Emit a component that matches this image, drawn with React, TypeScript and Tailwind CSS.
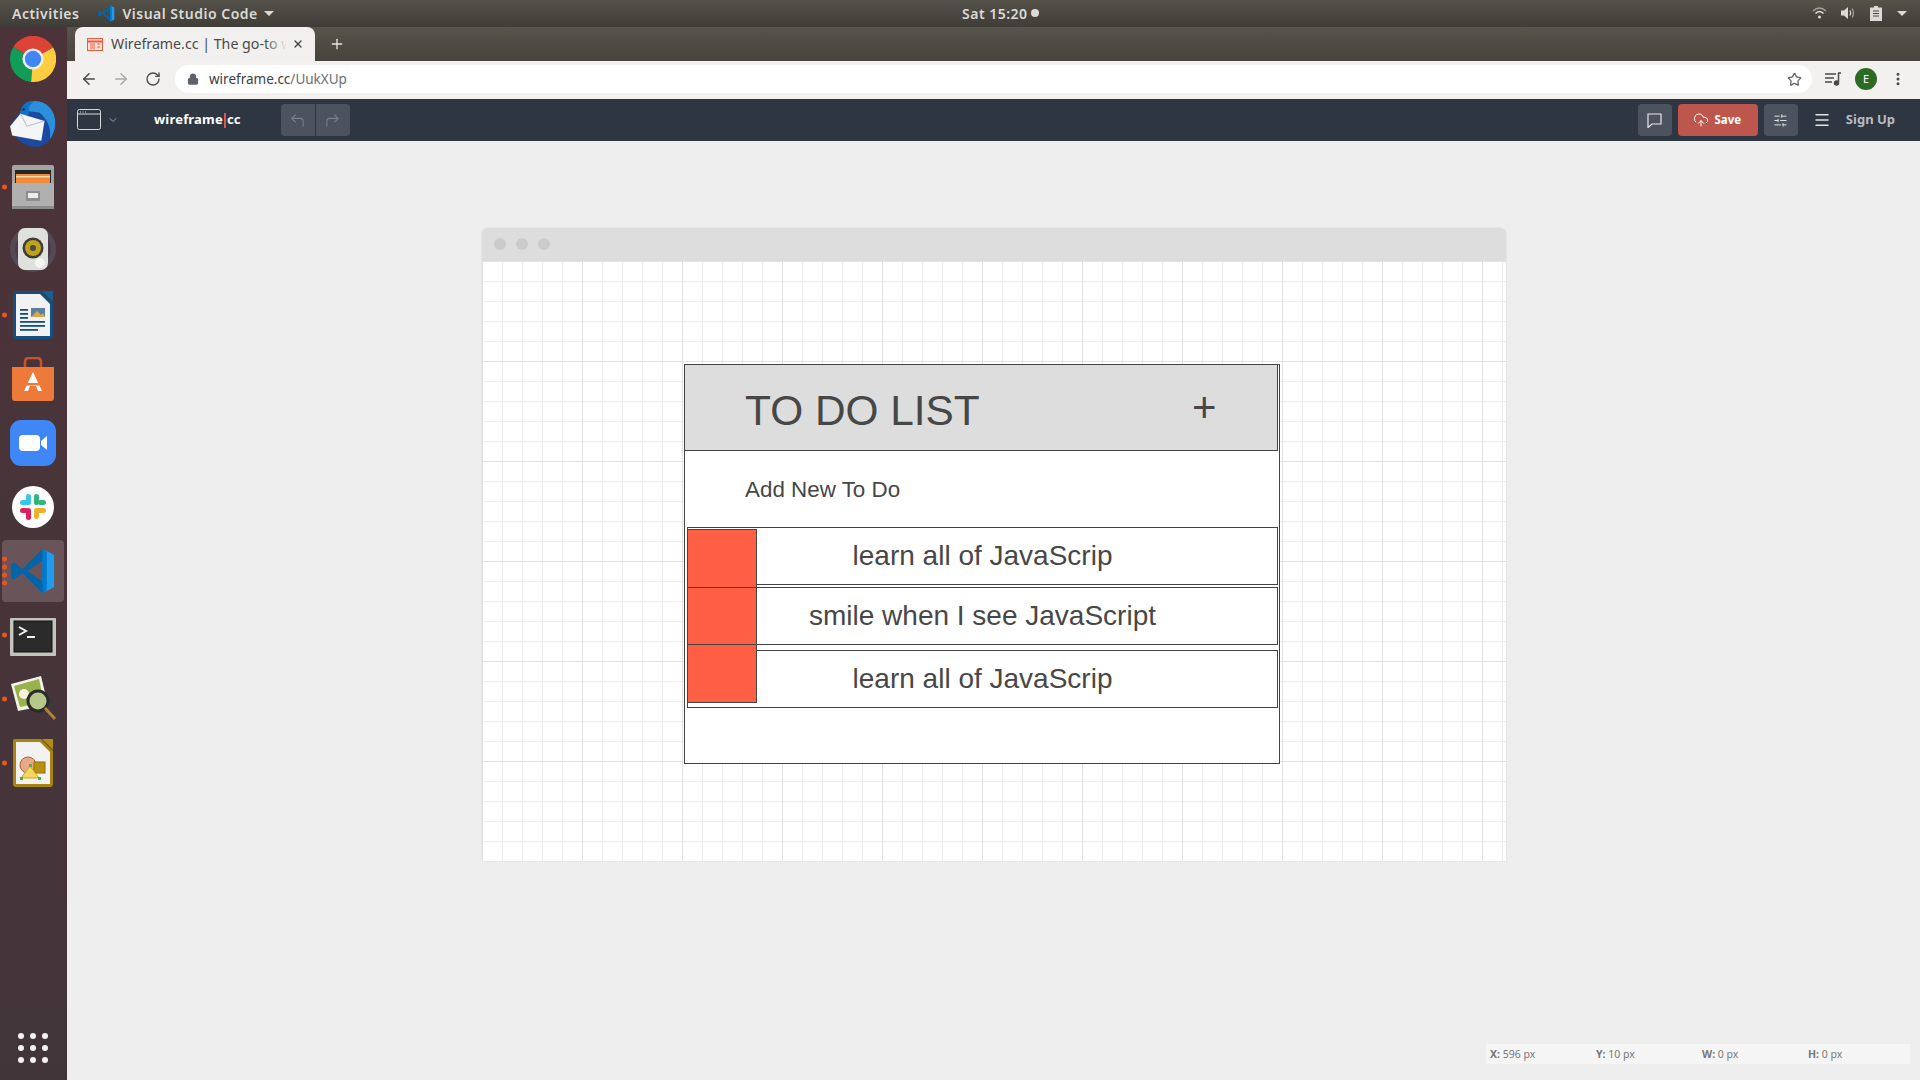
import { ArrowLeft, ArrowRight, ChevronDown, CloudUpload, CornerUpLeft, CornerUpRight, Lock, Menu, MoreVertical, Plus, RotateCw, SlidersHorizontal, Star, X } from "lucide-react";
import type { ReactNode } from "react";

// dock icons, all drawn by hand
function ChromeIcon() {
  return (
    <svg width="46" height="46" viewBox="0 0 48 48">
      <path d="M24 24 L45 12 A24 24 0 0 0 3.500 11.500 Z" fill="#db4437" />
      <path d="M24 24 L3.500 11.500 A24 24 0 0 0 22 47.900 Z" fill="#0f9d58" />
      <path d="M24 24 L22 47.900 A24 24 0 0 0 45 12 Z" fill="#ffcd40" />
      <circle cx="24" cy="24" r="11" fill="#f1f1f1" />
      <circle cx="24" cy="24" r="8.500" fill="#4285f4" />
    </svg>
  );
}

function ThunderbirdIcon() {
  return (
    <svg width="50" height="50" viewBox="0 0 48 48">
      <path d="M4 24 C4 38 14 47 28 47 C38 46 45 36 46 25 C46 14 40 6 30 3 L12 12 Z" fill="#1c4aa0" />
      <path d="M13 12 C16 2 30 -1 40 9 C47 17 47 30 40 40 C42 30 38 20 30 14 Z" fill="#2b8fdc" />
      <path d="M12 15 C12 6 19 2 25 3 C21 6 19 10 20 15 L15 20 Z" fill="#1273c4" />
      <circle cx="15" cy="11" r="1.200" fill="#0c2a55" />
      <path d="M2 27 L12 15 L35 22 L32 41 L4 36 Z" fill="#f5f5f5" />
      <path d="M12 15 L18 27 L35 22" fill="none" stroke="#b8bcc4" strokeWidth="1" />
    </svg>
  );
}

function FilesIcon() {
  return (
    <svg width="42" height="44" viewBox="0 0 42 44">
      <rect x="0" y="0" width="42" height="44" rx="2" fill="#a3a3a3" />
      <rect x="3" y="5" width="36" height="14" fill="#262626" />
      <rect x="4" y="9" width="34" height="9" fill="#f08a3c" />
      <rect x="4" y="11" width="34" height="1.500" fill="#f7d9a8" />
      <rect x="0" y="18" width="42" height="26" rx="1" fill="#b0b0b0" />
      <rect x="0" y="41" width="42" height="3" rx="1" fill="#8a8a8a" />
      <rect x="14" y="26" width="14" height="10" rx="1" fill="#8d8d8d" />
      <rect x="16" y="28" width="10" height="5" fill="#ededed" />
    </svg>
  );
}

function SpeakerIcon() {
  return (
    <svg width="48" height="46" viewBox="0 0 48 46">
      <circle cx="24" cy="21" r="23" fill="#544a55" />
      <circle cx="24" cy="21" r="18" fill="#4a3c47" />
      <rect x="9" y="0" width="30" height="42" rx="7" fill="#dfe1dd" />
      <circle cx="24" cy="20" r="10.500" fill="#3c3c38" />
      <circle cx="24" cy="20" r="8" fill="#bfa11c" />
      <circle cx="24" cy="20" r="3" fill="#4a4a40" />
      <circle cx="31" cy="35" r="5" fill="#f4f4f2" />
    </svg>
  );
}

function WriterIcon() {
  return (
    <svg width="40" height="48" viewBox="0 0 40 48">
      <path d="M2 0 H28 L40 12 V45 Q40 48 37 48 H3 Q0 48 0 45 V2 Q0 0 2 0 Z" fill="#14507f" />
      <path d="M3 3 H27 L37 13 V45 H3 Z" fill="#f2f2f2" />
      <path d="M29 0 H40 V11 Z" fill="#14608f" />
      <rect x="7" y="18" width="8" height="1.800" fill="#14507f" />
      <rect x="7" y="22" width="8" height="1.800" fill="#14507f" />
      <rect x="7" y="26" width="8" height="1.800" fill="#14507f" />
      <rect x="7" y="30" width="25" height="1.800" fill="#14507f" />
      <rect x="7" y="34" width="25" height="1.800" fill="#14507f" />
      <rect x="7" y="38" width="18" height="1.800" fill="#14507f" />
      <rect x="18" y="17" width="14" height="9" fill="#5d7f9e" />
      <path d="M18 26 L24 20 L28 24 L30 22 L32 26 Z" fill="#d9a84a" />
    </svg>
  );
}

function SoftwareIcon() {
  return (
    <svg width="42" height="44" viewBox="0 0 42 44">
      <path d="M13 10 V5 Q13 1 17 1 H25 Q29 1 29 5 V10" fill="none" stroke="#c9532a" strokeWidth="2.500" />
      <path d="M0 10 H42 V41 Q42 44 39 44 H3 Q0 44 0 41 Z" fill="#ee7a3a" />
      <path d="M21 15 L30 34 H26 L24 29 H18 L16 34 H12 Z" fill="#fff" />
      <rect x="12" y="26" width="18" height="2.500" fill="#ee7a3a" />
    </svg>
  );
}

function ZoomIcon() {
  return (
    <svg width="46" height="46" viewBox="0 0 46 46">
      <rect width="46" height="46" rx="11" fill="#3f86f7" />
      <rect x="9" y="15" width="21" height="16" rx="4" fill="#fff" />
      <path d="M31 21 L37 16 V30 L31 25 Z" fill="#fff" />
    </svg>
  );
}

function SlackIcon() {
  return (
    <svg width="42" height="42" viewBox="0 0 42 42">
      <circle cx="21" cy="21" r="21" fill="#fff" />
      <rect x="8" y="14" width="11" height="5" rx="2.500" fill="#36c5f0" />
      <rect x="14" y="8" width="5" height="8" rx="2.500" fill="#36c5f0" />
      <rect x="22" y="8" width="5" height="11" rx="2.500" fill="#2eb67d" />
      <rect x="26" y="14" width="8" height="5" rx="2.500" fill="#2eb67d" />
      <rect x="22" y="22" width="12" height="5" rx="2.500" fill="#ecb22e" />
      <rect x="22" y="25" width="5" height="8" rx="2.500" fill="#ecb22e" />
      <rect x="14" y="22" width="5" height="12" rx="2.500" fill="#e01e5a" />
      <rect x="8" y="22" width="8" height="5" rx="2.500" fill="#e01e5a" />
    </svg>
  );
}

function VsCodeIcon({ size }: { size: number }) {
  return (
    <svg width={size} height={size} viewBox="0 0 48 48">
      <path d="M34 1 L46 7 V41 L34 47 Z" fill="#1f9cf0" />
      <path d="M34 1 L13 22 L4 15 L1 17 V31 L4 33 L13 26 L34 47 L38 44 V4 Z M34 13 V35 L18 24 Z" fill="#0065a9" fillRule="evenodd" />
      <path d="M34 1 L38 4 V44 L34 47 Z" fill="#007acc" />
    </svg>
  );
}

function TerminalIcon() {
  return (
    <svg width="46" height="38" viewBox="0 0 46 38">
      <rect width="46" height="38" rx="1" fill="#c4c4bf" />
      <rect x="4" y="3" width="38" height="31" fill="#2b2b2b" stroke="#111" />
      <path d="M9 9 L16 13 L9 17" fill="none" stroke="#f2f2f2" strokeWidth="2" />
      <rect x="17" y="18" width="8" height="2" fill="#f2f2f2" />
    </svg>
  );
}

function ViewerIcon() {
  return (
    <svg width="46" height="48" viewBox="0 0 46 48">
      <path d="M1 9 L31 1 L38 30 L8 36 Z" fill="#f2f2ea" />
      <path d="M4 11 L29 4 L34 27 L10 32 Z" fill="#97b34a" />
      <circle cx="14" cy="19" r="5" fill="#f6f1e0" />
      <circle cx="28" cy="26" r="10" fill="#b5c78a" stroke="#2b2b2b" strokeWidth="3" />
      <path d="M35 33 L45 44" stroke="#b07f3e" strokeWidth="3" />
    </svg>
  );
}

function DrawIcon() {
  return (
    <svg width="40" height="48" viewBox="0 0 40 48">
      <path d="M2 0 H28 L40 12 V45 Q40 48 37 48 H3 Q0 48 0 45 V2 Q0 0 2 0 Z" fill="#a88510" />
      <path d="M3 3 H27 L37 13 V45 H3 Z" fill="#f2f2f2" />
      <path d="M29 0 H40 V11 Z" fill="#b08d12" />
      <circle cx="15" cy="26" r="8" fill="#e8a88a" stroke="#b0603e" />
      <rect x="21" y="23" width="11" height="11" fill="#b8920e" stroke="#8a6e08" />
      <path d="M17 27 L26 39 H8 Z" fill="#f4d65e" stroke="#c9a820" />
      <rect x="16" y="25" width="3" height="3" fill="#4caf50" />
      <rect x="7" y="38" width="3" height="3" fill="#4caf50" />
      <rect x="25" y="38" width="3" height="3" fill="#4caf50" />
    </svg>
  );
}

function DockItem({ dots = 0, active = false, children }: { dots?: number; active?: boolean; children: ReactNode }) {
  return (
    <div className="relative flex h-16 w-full items-center justify-center pr-[1px]">
      {active && <div className="absolute left-[2px] right-[3px] top-[1px] bottom-[1px] rounded bg-[#685459]" />}
      <div className="absolute left-[2px] top-1/2 flex -translate-y-1/2 flex-col gap-[3px]">
        {Array.from({ length: dots }).map((_, i) => (
          <span key={i} className="block h-[5px] w-[5px] rounded-full bg-[#e95420]" />
        ))}
      </div>
      <div className="relative flex items-center justify-center">{children}</div>
    </div>
  );
}

function Dock() {
  return (
    <aside className="flex w-[67px] shrink-0 flex-col justify-between bg-linear-to-b from-[#4c3339] to-[#423539]">
      <div className="flex flex-col">
        <DockItem><ChromeIcon /></DockItem>
        <DockItem><ThunderbirdIcon /></DockItem>
        <DockItem dots={1}><FilesIcon /></DockItem>
        <DockItem><SpeakerIcon /></DockItem>
        <DockItem dots={1}><WriterIcon /></DockItem>
        <DockItem><SoftwareIcon /></DockItem>
        <DockItem><ZoomIcon /></DockItem>
        <DockItem><SlackIcon /></DockItem>
        <DockItem dots={4} active><VsCodeIcon size={46} /></DockItem>
        <DockItem dots={1}><div className="mt-[4px]"><TerminalIcon /></div></DockItem>
        <DockItem dots={1}><ViewerIcon /></DockItem>
        <DockItem dots={1}><DrawIcon /></DockItem>
      </div>
      <div className="mb-[17px] ml-[18px] grid w-[30px] grid-cols-3 gap-[6px]">
        {Array.from({ length: 9 }).map((_, i) => (
          <span key={i} className="block h-[6px] w-[6px] rounded-full bg-[#f3f1f1]" />
        ))}
      </div>
    </aside>
  );
}

function TopBar() {
  return (
    <header className="flex h-[27px] items-center justify-between bg-linear-to-b from-[#55524a] to-[#3f3d37] pb-[1px] pl-3 pr-[13px] font-['Noto_Sans',sans-serif] text-[14px] font-semibold tracking-[0.5px] text-[#dcdad4]">
      <div className="flex items-center">
        <span>Activities</span>
        <span className="ml-[19px] mr-[7px]"><VsCodeIcon size={17} /></span>
        <span>Visual Studio Code</span>
        <span className="ml-[6px] h-0 w-0 border-x-[5px] border-t-[5px] border-x-transparent border-t-[#dcdad4]" />
      </div>
      <div className="absolute left-[962px] flex items-center gap-[3px]">
        <span>Sat 15:20</span>
        <span className="h-[8px] w-[8px] rounded-full bg-[#dcdad4]" />
      </div>
      <div className="flex items-center gap-[14px]">
        <svg width="15" height="14" viewBox="0 0 15 14" fill="none" stroke="#dcdad4" strokeWidth="1.500">
          <path d="M1 5 Q7.500 -1 14 5" opacity=".6" />
          <path d="M3.500 7.500 Q7.500 3.500 11.500 7.500" />
          <circle cx="7.500" cy="11" r="1.500" fill="#dcdad4" stroke="none" />
        </svg>
        <svg width="15" height="14" viewBox="0 0 15 14" fill="none" stroke="#dcdad4" strokeWidth="1.300">
          <path d="M0 4.500 H3 L7 1 V13 L3 9.500 H0 Z" fill="#dcdad4" stroke="none" />
          <path d="M9 4.500 Q10.500 7 9 9.500" />
          <path d="M11 2.500 Q14 7 11 11.500" opacity=".6" />
        </svg>
        <svg width="12" height="15" viewBox="0 0 12 15">
          <path d="M4 0 H8 V1.500 H12 V15 H0 V1.500 H4 Z" fill="#dcdad4" />
          <path d="M3 5 H9 M3 7.500 H9 M3 10 H9" stroke="#4a473f" strokeWidth="1" />
        </svg>
        <span className="ml-[1px] h-0 w-0 border-x-[5px] border-t-[5px] border-x-transparent border-t-[#dcdad4]" />
      </div>
    </header>
  );
}

function TabStrip() {
  return (
    <div className="flex h-[34px] items-center bg-linear-to-b from-[#57544b] to-[#45433c] pl-[8px]">
      <div className="flex h-[34px] w-[240px] items-center rounded-t-[8px] bg-[#f1f0ee] pl-[12px] pr-[11px] font-['Noto_Sans',sans-serif] text-[14.200px] text-[#4a4a4a]">
        <svg width="16" height="13" viewBox="0 0 16 13" className="mr-[8px] shrink-0" fill="none" stroke="#ee5a3b" strokeWidth="1">
          <rect x=".5" y=".5" width="15" height="12" fill="#fbe2db" />
          <path d="M.5 3.500 H15.500" strokeWidth="2" />
          <path d="M3 6 H8 M3 8 H8 M3 10 H8 M10 6 H13 M10 9 H13" />
        </svg>
        <span className="relative w-[176px] overflow-hidden whitespace-nowrap">
          Wireframe.cc | The go-to web
          <span className="absolute inset-y-0 right-0 w-[22px] bg-linear-to-r from-transparent to-[#f1f0ee]" />
        </span>
        <X size={12} strokeWidth={2.5} className="ml-auto shrink-0 text-[#3f3f3f]" />
      </div>
      <Plus size={16} strokeWidth={2} className="ml-[14px] text-[#e8e6e1]" />
    </div>
  );
}

function AddressBar() {
  return (
    <div className="flex h-[38px] items-center bg-[#f2f1f0] pb-[2px] pl-[13px] text-[#5f6368]">
      <ArrowLeft size={18} strokeWidth={2} className="text-[#4a4a4a]" />
      <ArrowRight size={18} strokeWidth={2} className="ml-[14px] text-[#a9a9a9]" />
      <RotateCw size={16} strokeWidth={2} className="ml-[15px] text-[#4a4a4a]" />
      <div className="ml-[14px] flex h-[28px] w-[1637px] items-center rounded-full bg-white pl-[12px] pr-[10px]">
        <Lock size={12} strokeWidth={2.5} className="text-[#5f6368]" fill="#5f6368" />
        <span className="ml-[10px] font-['Noto_Sans',sans-serif] text-[13.500px] text-[#3c4043]">
          wireframe.cc<span className="text-[#6b7075]">/UukXUp</span>
        </span>
        <Star size={15} strokeWidth={2} className="ml-auto text-[#5f6368]" />
      </div>
      <svg width="16" height="14" viewBox="0 0 16 14" className="ml-[13px]" fill="none" stroke="#4a4a4a" strokeWidth="1.500">
        <path d="M0 2 H11 M0 6 H9 M0 10 H7" />
        <path d="M13.500 1 V10" />
        <path d="M13 1 H16" />
        <circle cx="11.500" cy="11" r="2" fill="#4a4a4a" />
      </svg>
      <div className="ml-[14px] flex h-[22px] w-[22px] items-center justify-center rounded-full bg-[#2c6b24] font-['Noto_Sans',sans-serif] text-[11px] text-white">E</div>
      <MoreVertical size={16} strokeWidth={2.5} className="ml-[13px] text-[#4a4a4a]" />
    </div>
  );
}

function ToolBar() {
  return (
    <div className="flex h-[42px] items-center bg-[#2e3641] pl-[10px] pr-[25px] font-['Noto_Sans',sans-serif] text-[13px] font-bold">
      <svg width="24" height="22" viewBox="0 0 24 22" fill="none" stroke="#d8dade" strokeWidth="1">
        <rect x=".5" y=".5" width="23" height="20" rx="2" />
        <path d="M.5 5 H23.500" />
        <path d="M3 3 H4 M5.500 3 H6.500 M8 3 H9" />
      </svg>
      <ChevronDown size={12} className="ml-[6px] text-[#9aa0a8]" />
      <div className="ml-[35px] flex items-center tracking-[0.2px] text-white">
        wireframe
        <span className="mx-[1px] inline-block h-[15px] w-[2px] bg-[#e2574c]" />
        cc
      </div>
      <div className="ml-[40px] flex h-[32px] items-center gap-[1px]">
        <span className="flex h-full w-[34px] items-center justify-center rounded-l bg-[#4c535e] text-[#78808a]"><CornerUpLeft size={17} strokeWidth={1.5} /></span>
        <span className="flex h-full w-[34px] items-center justify-center rounded-r bg-[#4c535e] text-[#78808a]"><CornerUpRight size={17} strokeWidth={1.5} /></span>
      </div>
      <div className="ml-auto flex items-center">
        <span className="flex h-[32px] w-[34px] items-center justify-center rounded bg-[#4c535e]">
          <svg width="15" height="15" viewBox="0 0 15 15" fill="none" stroke="#e8e9eb" strokeWidth="1.200">
            <path d="M1 1 H14 V11 H5 L1 14.500 Z" />
          </svg>
        </span>
        <span className="ml-[6px] flex h-[32px] w-[80px] items-center justify-center gap-[6px] rounded bg-[#bd574d] pr-[2px] text-[11.500px] text-white"><CloudUpload size={16} strokeWidth={1.5} />Save</span>
        <span className="ml-[6px] flex h-[32px] w-[34px] items-center justify-center rounded bg-[#4c535e] text-[#e8e9eb]"><SlidersHorizontal size={15} strokeWidth={1.5} /></span>
        <Menu size={18} className="ml-[15px] text-[#e2e3e5]" />
        <span className="ml-[15px] text-[#b9bcc2]">Sign Up</span>
      </div>
    </div>
  );
}

function TodoRow({ text, className }: { text: string; className: string }) {
  return (
    <div className={`absolute left-[2px] flex h-[58px] w-[591px] items-center justify-center border border-[#444] pb-[1px] text-[28px] text-[#474747] ${className}`}>
      {text}
    </div>
  );
}

// the wireframe sits on a free canvas, so its shapes keep their own coordinates
function Wireframe() {
  return (
    <div className="relative h-[400px] w-[596px] border border-[#444] bg-white font-['Liberation_Sans',sans-serif]">
      <div className="absolute left-[-1px] top-[-1px] h-[87px] w-[594px] border border-[#444] bg-[#dddddd] text-[#474747]">
        <span className="absolute left-[60px] top-[22px] text-[42.400px] leading-[48px]">TO DO LIST</span>
        <span className="absolute left-[507px] top-[19px] text-[42px] leading-[48px]">+</span>
      </div>
      <span className="absolute left-[60px] top-[111px] text-[22.400px] leading-[28px] text-[#474747]">Add New To Do</span>
      <TodoRow text="learn all of JavaScrip" className="top-[162px]" />
      <TodoRow text="smile when I see JavaScript" className="top-[222px]" />
      <TodoRow text="learn all of JavaScrip" className="top-[285px]" />
      <div className="absolute left-[2px] top-[164px] h-[59px] w-[70px] border border-[#444] bg-[#ff5f45]" />
      <div className="absolute left-[2px] top-[222px] h-[58px] w-[70px] border border-[#444] bg-[#ff5f45]" />
      <div className="absolute left-[2px] top-[279px] h-[59px] w-[70px] border border-[#444] bg-[#ff5f45]" />
    </div>
  );
}

function Canvas() {
  return (
    <div className="w-[1024px] rounded-t-[6px] shadow-[0_0_2px_rgba(0,0,0,0.12)]">
      <div className="flex h-[33px] items-center gap-[10px] rounded-t-[6px] bg-[#dddddd] pb-[1px] pl-[12px]">
        <span className="h-[12px] w-[12px] rounded-full bg-[#cbcbcb]" />
        <span className="h-[12px] w-[12px] rounded-full bg-[#cbcbcb]" />
        <span className="h-[12px] w-[12px] rounded-full bg-[#cbcbcb]" />
      </div>
      <div className="relative h-[600px] bg-white bg-[linear-gradient(to_right,#e2e2e2_1px,transparent_1px),linear-gradient(to_bottom,#e2e2e2_1px,transparent_1px),linear-gradient(to_right,#eeeeee_1px,transparent_1px),linear-gradient(to_bottom,#eeeeee_1px,transparent_1px)] bg-[size:100px_100px,100px_100px,20px_20px,20px_20px]">
        <div className="absolute left-[202px] top-[103px]">
          <Wireframe />
        </div>
      </div>
    </div>
  );
}

function StatusBar() {
  return (
    <div className="absolute bottom-[16px] right-[10px] flex h-[20px] w-[424px] items-center bg-[#f5f5f5] pl-[4px] pt-[1px] font-['Noto_Sans',sans-serif] text-[10.500px] text-[#777]">
      <span className="w-[106px]"><b>X:</b> 596 px</span>
      <span className="w-[106px]"><b>Y:</b> 10 px</span>
      <span className="w-[106px]"><b>W:</b> 0 px</span>
      <span><b>H:</b> 0 px</span>
    </div>
  );
}

export default function App() {
  return (
    <div className="flex h-[1080px] w-[1920px] flex-col overflow-hidden">
      <TopBar />
      <div className="flex flex-1">
        <Dock />
        <div className="flex flex-1 flex-col">
          <TabStrip />
          <AddressBar />
          <ToolBar />
          <main className="relative flex flex-1 items-start bg-[#eeeeee] pl-[415px] pt-[87px]">
            <Canvas />
            <StatusBar />
          </main>
        </div>
      </div>
    </div>
  );
}
